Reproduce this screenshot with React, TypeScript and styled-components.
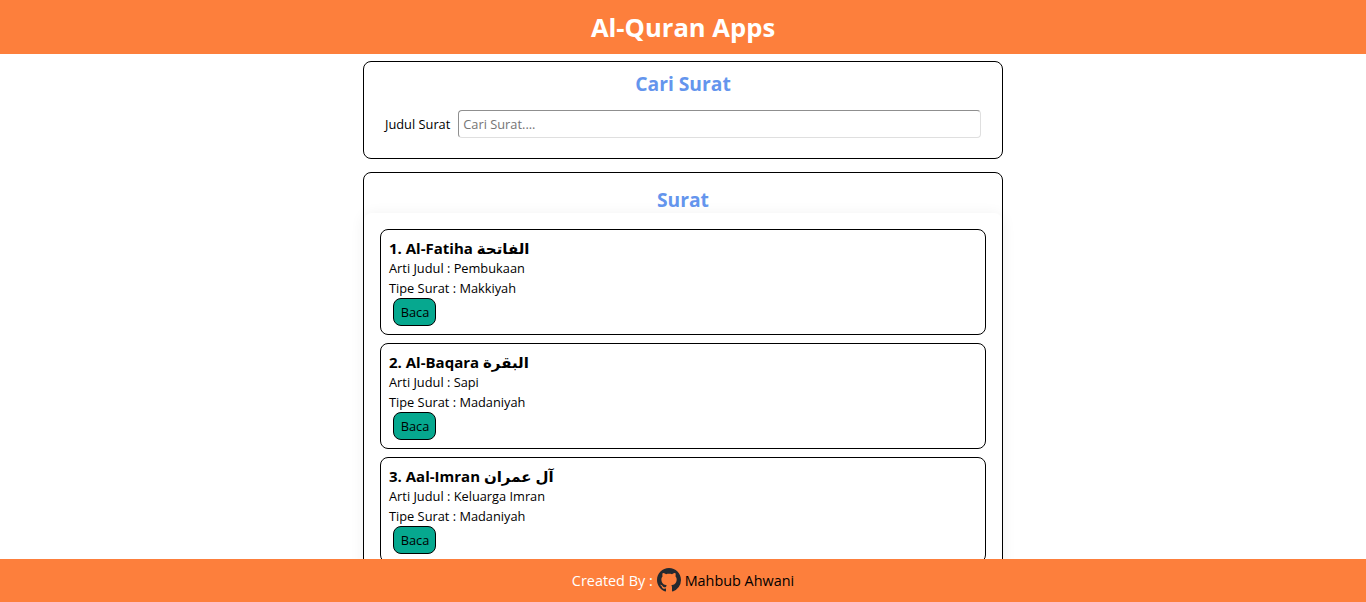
import React from "react";
import styled, { createGlobalStyle } from "styled-components";

const GlobalStyle = createGlobalStyle`
  * { box-sizing: border-box; margin: 0; padding: 0; }
  html, body { height: 100%; overflow: hidden; }
  body {
    background: #fff;
    color: #000;
    font-family: "Open Sans", "DejaVu Sans", sans-serif;
    font-size: 12.8px;
    line-height: 20px;
  }
`;

const Page = styled.div`
  height: 602px;
  display: flex;
  flex-direction: column;
`;

const Header = styled.header`
  flex: none;
  height: 54px;
  display: flex;
  align-items: center;
  justify-content: center;
  padding-top: 2px;
  background: #fd7f3c;
`;

const SiteTitle = styled.h1`
  color: #fff;
  font-size: 25.6px;
  line-height: 36px;
`;

const Main = styled.main`
  flex: 1;
  min-height: 0;
  overflow: hidden;
  display: flex;
  flex-direction: column;
  align-items: center;
  gap: 13px;
  padding-top: 7px;
`;

const Panel = styled.section`
  flex: none;
  width: 640px;
  border: 1px solid #000;
  border-radius: 8px;
`;

const SearchPanel = styled(Panel)`
  height: 98px;
  padding: 8px 21px 0;
`;

const PanelTitle = styled.h2`
  color: cornflowerblue;
  font-size: 19.25px;
  line-height: 28px;
  text-align: center;
`;

const SearchRow = styled.div`
  display: flex;
  align-items: center;
  gap: 8px;
  margin-top: 12px;
`;

const SearchInput = styled.input`
  flex: 1;
  min-width: 0;
  height: 28px;
  padding: 0 4px;
  font: inherit;
  border: 1px solid;
  border-color: #8f8f8f #dfdfdf #dfdfdf #8f8f8f;
  border-radius: 4px;
  background: #fff;
  outline: none;
  &::placeholder { color: #757575; }
`;

const ListPanel = styled(Panel)`
  padding-top: 13px;
`;

const List = styled.div`
  display: flex;
  flex-direction: column;
  gap: 8px;
  margin-top: -1px;
  padding: 16px;
  border-radius: 8px;
  box-shadow: 0 2px 15px rgba(0, 0, 0, 0.07);
`;

const Card = styled.article`
  height: 106px;
  padding: 8px;
  border: 1px solid #000;
  border-radius: 8px;
`;

const CardTitle = styled.h3`
  font-size: 15px;
  line-height: 20px;
`;

const ReadButton = styled.button`
  display: block;
  width: 43px;
  height: 28px;
  margin-left: 4px;
  padding-left: 1px;
  font: inherit;
  color: #000;
  background: #06a88f;
  border: 1px solid #000;
  border-radius: 8px;
`;

const Footer = styled.footer`
  flex: none;
  height: 43px;
  display: flex;
  align-items: center;
  justify-content: center;
  gap: 4px;
  color: #fff;
  background: #fd7f3c;
  font-size: 14.4px;
`;

const Author = styled.span`
  color: #000;
`;

const Mark = styled.svg`
  margin-bottom: 1px;
`;

const surahs = [
  { no: 1, name: "Al-Fatiha", arabic: "الفاتحة", meaning: "Pembukaan", type: "Makkiyah" },
  { no: 2, name: "Al-Baqara", arabic: "البقرة", meaning: "Sapi", type: "Madaniyah" },
  { no: 3, name: "Aal-Imran", arabic: "آل عمران", meaning: "Keluarga Imran", type: "Madaniyah" },
];

const GithubMark = () => (
  <Mark width="24" height="24" viewBox="0 0 16 16" fill="#24292f" aria-hidden="true">
    <path d="M8 0C3.58 0 0 3.58 0 8c0 3.54 2.29 6.53 5.47 7.59.4.07.55-.17.55-.38 0-.19-.01-.82-.01-1.49-2.01.37-2.53-.49-2.69-.94-.09-.23-.48-.94-.82-1.13-.28-.15-.68-.52-.01-.53.63-.01 1.08.58 1.23.82.72 1.21 1.87.87 2.33.66.07-.52.28-.87.51-1.07-1.78-.2-3.64-.89-3.64-3.95 0-.87.31-1.59.82-2.15-.08-.2-.36-1.02.08-2.12 0 0 .67-.21 2.2.82.64-.18 1.32-.27 2-.27s1.36.09 2 .27c1.53-1.04 2.2-.82 2.2-.82.44 1.1.16 1.92.08 2.12.51.56.82 1.27.82 2.15 0 3.07-1.87 3.75-3.65 3.95.29.25.54.73.54 1.48 0 1.07-.01 1.93-.01 2.2 0 .21.15.46.55.38A8.01 8.01 0 0 0 16 8c0-4.42-3.58-8-8-8z" />
  </Mark>
);

export default function App() {
  return (
    <Page>
      <GlobalStyle />
      <Header>
        <SiteTitle>Al-Quran Apps</SiteTitle>
      </Header>
      <Main>
        <SearchPanel>
          <PanelTitle>Cari Surat</PanelTitle>
          <SearchRow>
            <label htmlFor="judul">Judul Surat</label>
            <SearchInput id="judul" placeholder="Cari Surat...." />
          </SearchRow>
        </SearchPanel>
        <ListPanel>
          <PanelTitle>Surat</PanelTitle>
          <List>
            {surahs.map((s) => (
              <Card key={s.no}>
                <CardTitle>
                  {s.no}. {s.name} {s.arabic}
                </CardTitle>
                <p>Arti Judul : {s.meaning}</p>
                <p>Tipe Surat : {s.type}</p>
                <ReadButton>Baca</ReadButton>
              </Card>
            ))}
          </List>
        </ListPanel>
      </Main>
      <Footer>
        <span>Created By :</span>
        <GithubMark />
        <Author>Mahbub Ahwani</Author>
      </Footer>
    </Page>
  );
}
